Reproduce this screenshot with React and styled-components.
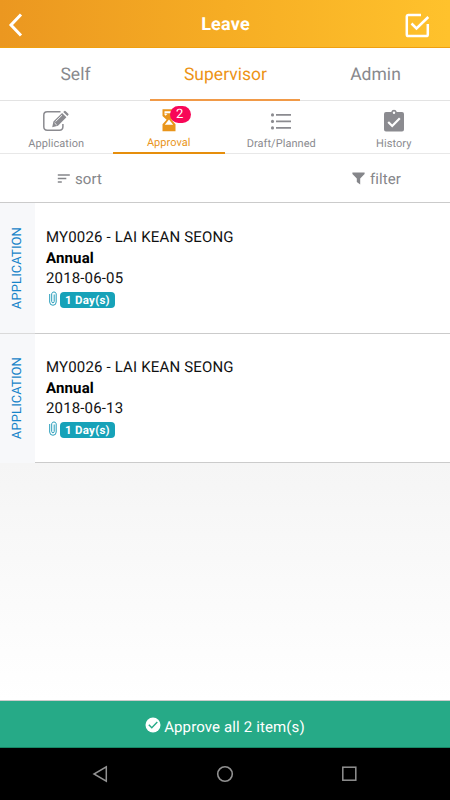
import React from "react";
import styled, { createGlobalStyle } from "styled-components";

const GlobalStyle = createGlobalStyle`
  * { box-sizing: border-box; }
  body { margin: 0; background: #fff; font-family: Roboto, sans-serif; text-rendering: geometricPrecision; }
`;

const Screen = styled.div`
  width: 450px;
  height: 800px;
  display: flex;
  flex-direction: column;
  overflow: hidden;
  background: #fff;
`;

const Header = styled.header`
  height: 48px;
  flex: none;
  display: grid;
  grid-template-columns: 60px 1fr 60px;
  align-items: center;
  background: linear-gradient(90deg, #eb9720 0%, #f6ad24 50%, #ffc22c 100%);
  border-bottom: 1px solid #efa010;
`;

const Title = styled.h1`
  margin: 0;
  padding: 3px 0 0 1px;
  text-align: center;
  color: #fff;
  font-size: 18px;
  line-height: 24px;
  font-weight: 700;
  letter-spacing: 0.2px;
`;

const BackButton = styled.a`
  display: flex;
  padding: 2px 0 0 8px;
`;

const SelectAllButton = styled.a`
  display: flex;
  padding: 4px 0 0 15px;
`;

const RoleTabs = styled.nav`
  height: 53px;
  flex: none;
  display: grid;
  grid-template-columns: repeat(3, 1fr);
`;

const RoleTab = styled.a`
  display: flex;
  justify-content: center;
  padding: 17px 0 0 1px;
  font-size: 17.5px;
  line-height: 20px;
  letter-spacing: 0.02px;
  color: ${(p) => (p.$active ? "#ed9315" : "#88898d")};
  border-bottom: ${(p) => (p.$active ? "2px solid #f19a48" : "1px solid #e3e3e3")};
`;

const SectionTabs = styled.nav`
  height: 53px;
  flex: none;
  display: grid;
  grid-template-columns: repeat(4, 1fr);
`;

const SectionTab = styled.a`
  display: flex;
  flex-direction: column;
  align-items: center;
  color: ${(p) => (p.$active ? "#e9951b" : "#8b8b90")};
  border-bottom: ${(p) => (p.$active ? "2px solid #e68e0c" : "1px solid #e8e8e8")};
`;

const TabIcon = styled.span`
  position: relative;
  display: flex;
  height: 34px;
  padding-top: 7px;
`;

const TabLabel = styled.span`
  font-size: 11px;
  line-height: ${(p) => (p.$active ? "15px" : "17px")};
  letter-spacing: 0.06px;
`;

const Badge = styled.span`
  position: absolute;
  left: 8px;
  top: 5px;
  width: 21px;
  height: 17px;
  border-radius: 9px;
  background: #f80757;
  color: #fff;
  font-size: 13px;
  line-height: 18px;
  text-align: center;
  padding-right: 1px;
`;

const Toolbar = styled.div`
  height: 49px;
  flex: none;
  display: flex;
  justify-content: space-between;
  padding: 1px 49px 0 57px;
  border-bottom: 1px solid #cbcbcb;
`;

const Tool = styled.a`
  display: flex;
  align-items: center;
  gap: 5px;
  color: #85868a;
  font-size: 15px;
  letter-spacing: 0.1px;
`;

const Card = styled.article`
  height: ${(p) => (p.$last ? "129px" : "131px")};
  flex: none;
  display: flex;
`;

const Kind = styled.div`
  width: 35px;
  display: flex;
  align-items: center;
  justify-content: center;
  background: #f7f8fa;
  border-bottom: 1px solid ${(p) => (p.$last ? "#f7f8fa" : "#dadada")};

  span {
    padding-right: 1px;
    writing-mode: vertical-rl;
    transform: rotate(180deg);
    color: #1784c9;
    font-size: 13px;
    line-height: 16px;
    letter-spacing: 0.1px;
  }
`;

const Details = styled.div`
  flex: 1;
  padding: ${(p) => (p.$last ? "23px" : "24px")} 0 0 11px;
  color: #111;
  font-size: 15px;
  line-height: 21px;
  border-bottom: 1px solid #cbcbcb;
`;

const Name = styled.div`
  letter-spacing: 0.17px;
`;

const LeaveType = styled.div`
  color: #000;
  font-weight: 700;
  letter-spacing: 0.15px;
`;

const DateText = styled.div`
  margin-top: -1px;
  letter-spacing: 0.15px;
`;

const Duration = styled.div`
  display: flex;
  gap: 3px;
  padding: 2px 0 0 3px;
`;

const DayCount = styled.span`
  height: 16px;
  width: 55px;
  margin-top: 1px;
  border-radius: 4px;
  background: #17a2b8;
  color: #fff;
  font-size: 11.5px;
  line-height: 17px;
  font-weight: 700;
  text-align: center;
  letter-spacing: 0.25px;
`;

const EmptyArea = styled.div`
  flex: 1;
  background: linear-gradient(#f5f5f5, #fff);
  border-bottom: 1px solid #ccc;
`;

const ApproveButton = styled.a`
  height: 47px;
  flex: none;
  display: flex;
  align-items: center;
  justify-content: center;
  gap: 3px;
  padding-top: 5px;
  background: #26aa87;
  border-bottom: 1px solid #168765;
  color: #fff;
  font-size: 15px;
  letter-spacing: 0.13px;

  svg { margin-top: -4px; }
`;

const SystemBar = styled.footer`
  height: 52px;
  flex: none;
  display: flex;
  align-items: center;
  justify-content: space-between;
  padding: 0 93px 0 92px;
  background: #000;
`;

const BackIcon = () => (
  <svg width="15" height="26" viewBox="0 0 15 26">
    <path d="M13 2.5 3 13l10 10.5" fill="none" stroke="#fff" strokeWidth="3" />
  </svg>
);

const CheckboxIcon = () => (
  <svg width="25" height="25" viewBox="0 0 25 25" fill="none" stroke="#fff">
    <path d="M16 2H3.4Q1.8 2 1.8 3.6v17.8Q1.8 23 3.4 23h17.8q1.6 0 1.6-1.6V11" strokeWidth="2.5" />
    <path d="m6.5 10.5 5 5L23.3 4" strokeWidth="2.5" />
  </svg>
);

const EditIcon = () => (
  <svg width="28" height="24" viewBox="0 0 28 24">
    <path d="M18.5 3.8H5.2Q1.8 3.8 1.8 7.2v11.6q0 3.4 3.4 3.4h12.3q3.4 0 3.4-3.4V16" fill="none" stroke="currentColor" strokeWidth="1.5" />
    <path d="m10.2 19.3 1.2-5.9L20.1 5l4.3 4.2-8.4 8.6ZM21.2 4.1l.9-.9q.8-.8 1.6 0l2.6 2.5q.7.7 0 1.4l-.9 1Z" fill="currentColor" />
    <path d="m13.5 13.6 6.5-6.4M12.5 14.9l2.2 2.1" stroke="#fff" strokeWidth=".9" />
  </svg>
);

const HourglassIcon = () => (
  <svg width="14" height="24" viewBox="0 0 14 24">
    <path d="M.5 1.3h13v6.6L9.4 11.8l4.1 4.5v7H.5v-7l4.1-4.5L.5 7.9Z" fill="currentColor" />
    <path d="M2.5 3.3h9v2h-9ZM7 11.6l4.2 5.2H2.8Z" fill="#fff" />
    <path d="M2.5 5.3 5.5 6l-2 1.8-1-1Z" fill="#fff" />
  </svg>
);

const ListIcon = () => (
  <svg width="22" height="24" viewBox="0 0 22 24" fill="currentColor">
    <circle cx="2.5" cy="6.9" r="1.55" />
    <circle cx="2.5" cy="13.4" r="1.55" />
    <circle cx="2.5" cy="19.9" r="1.55" />
    <path d="M6 6h15v1.8H6ZM6 12.5h15v1.8H6ZM6 19h15v1.8H6Z" />
  </svg>
);

const ClipboardIcon = () => (
  <svg width="20" height="24" viewBox="0 0 20 24">
    <path d="M2 4h5.2a2.9 2.9 0 0 1 5.6 0H18q2 0 2 2v15.6q0 2-2 2H2q-2 0-2-2V6q0-2 2-2Z" fill="currentColor" />
    <circle cx="10" cy="4.8" r="1.2" fill="#fff" />
    <path d="m4.2 14 4 4 7.6-7.8" fill="none" stroke="#fff" strokeWidth="2.2" />
  </svg>
);

const SortIcon = () => (
  <svg width="13" height="10" viewBox="0 0 13 10" fill="none" stroke="currentColor" strokeWidth="1.3">
    <path d="M.8 1h12M.8 4.5h8.5M.8 8h4" />
  </svg>
);

const FilterIcon = () => (
  <svg width="13" height="13" viewBox="0 0 13 13" fill="currentColor">
    <path d="M.4.5h12.2v1.6L8.2 6.6v6L4.8 10V6.6L.4 2.1Z" />
  </svg>
);

const PaperclipIcon = () => (
  <svg width="8" height="15" viewBox="0 0 8 15" fill="none" stroke="#279dba" strokeWidth="1">
    <path d="M.7 3v8a3.2 3.2 0 0 0 6.5 0V2.8a2.3 2.3 0 0 0-4.5 0v7.7a1.25 1.25 0 0 0 2.5 0V3.5" />
  </svg>
);

const ApprovedIcon = () => (
  <svg width="16" height="16" viewBox="0 0 16 16">
    <circle cx="8" cy="8" r="7.5" fill="#fff" />
    <path d="m3.8 7.7 3 3 5.5-5.6" fill="none" stroke="#26aa87" strokeWidth="1.4" />
  </svg>
);

const NavBackIcon = () => (
  <svg width="16" height="18" viewBox="0 0 16 18">
    <path d="M14.3 1.8v14.4L2 9Z" fill="none" stroke="#919191" strokeWidth="1.5" />
  </svg>
);

const NavHomeIcon = () => (
  <svg width="18" height="18" viewBox="0 0 18 18">
    <circle cx="9" cy="9" r="7.3" fill="none" stroke="#919191" strokeWidth="1.6" />
  </svg>
);

const NavRecentIcon = () => (
  <svg width="16" height="16" viewBox="0 0 16 16">
    <rect x="1.8" y="1.2" width="13" height="13" fill="none" stroke="#919191" strokeWidth="1.5" />
  </svg>
);

const requests = [
  { name: "MY0026 - LAI KEAN SEONG", type: "Annual", date: "2018-06-05", days: "1 Day(s)" },
  { name: "MY0026 - LAI KEAN SEONG", type: "Annual", date: "2018-06-13", days: "1 Day(s)" },
];

const RequestCard = ({ request, last }) => (
  <Card $last={last}>
    <Kind $last={last}><span>APPLICATION</span></Kind>
    <Details $last={last}>
      <Name>{request.name}</Name>
      <LeaveType>{request.type}</LeaveType>
      <DateText>{request.date}</DateText>
      <Duration>
        <PaperclipIcon />
        <DayCount>{request.days}</DayCount>
      </Duration>
    </Details>
  </Card>
);

export default function App() {
  return (
    <>
      <GlobalStyle />
      <Screen>
        <Header>
          <BackButton><BackIcon /></BackButton>
          <Title>Leave</Title>
          <SelectAllButton><CheckboxIcon /></SelectAllButton>
        </Header>
        <RoleTabs>
          <RoleTab>Self</RoleTab>
          <RoleTab $active>Supervisor</RoleTab>
          <RoleTab>Admin</RoleTab>
        </RoleTabs>
        <SectionTabs>
          <SectionTab>
            <TabIcon><EditIcon /></TabIcon>
            <TabLabel>Application</TabLabel>
          </SectionTab>
          <SectionTab $active>
            <TabIcon><HourglassIcon /><Badge>2</Badge></TabIcon>
            <TabLabel $active>Approval</TabLabel>
          </SectionTab>
          <SectionTab>
            <TabIcon><ListIcon /></TabIcon>
            <TabLabel>Draft/Planned</TabLabel>
          </SectionTab>
          <SectionTab>
            <TabIcon><ClipboardIcon /></TabIcon>
            <TabLabel>History</TabLabel>
          </SectionTab>
        </SectionTabs>
        <Toolbar>
          <Tool><SortIcon />sort</Tool>
          <Tool><FilterIcon />filter</Tool>
        </Toolbar>
        {requests.map((request, i) => (
          <RequestCard key={request.date} request={request} last={i === requests.length - 1} />
        ))}
        <EmptyArea />
        <ApproveButton><ApprovedIcon />Approve all 2 item(s)</ApproveButton>
        <SystemBar>
          <NavBackIcon />
          <NavHomeIcon />
          <NavRecentIcon />
        </SystemBar>
      </Screen>
    </>
  );
}
